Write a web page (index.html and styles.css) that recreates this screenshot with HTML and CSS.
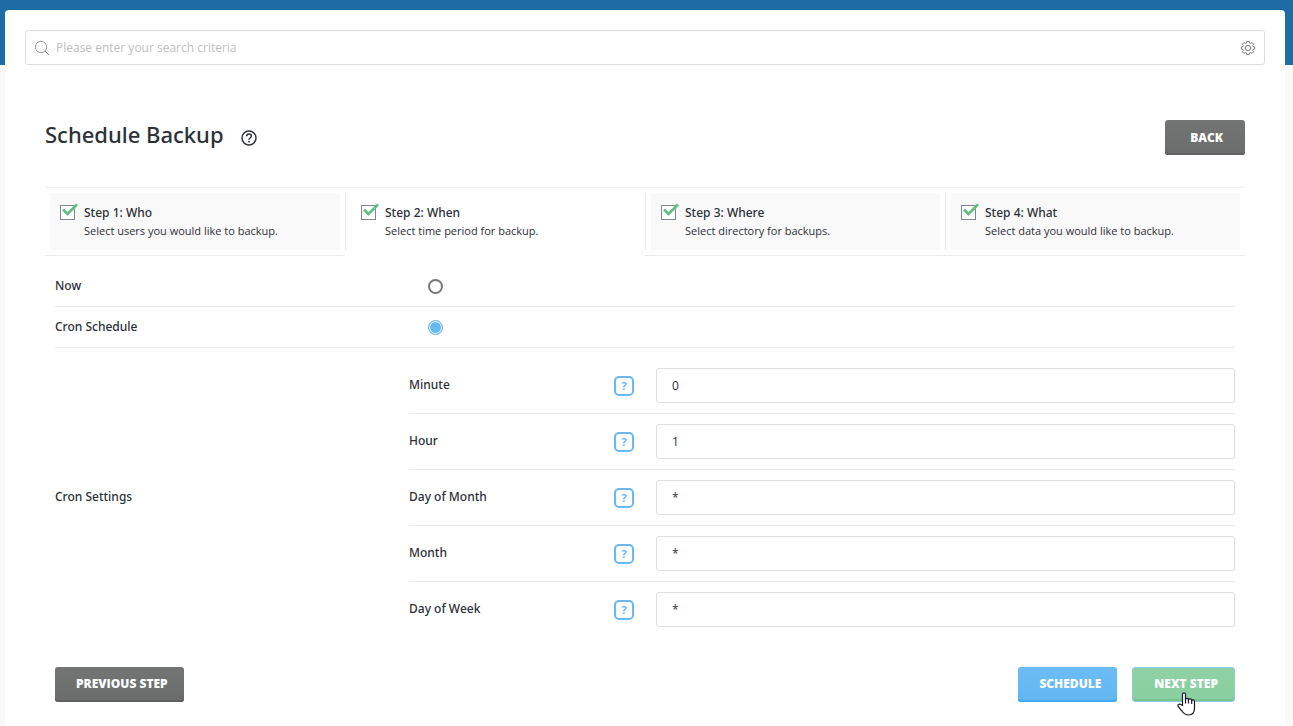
FILE: index.html
```
<!DOCTYPE html>
<html lang="en">
<head>
<meta charset="utf-8">
<title>Schedule Backup</title>
<meta name="viewport" content="width=device-width, initial-scale=1">
<link rel="stylesheet" href="styles.css">
</head>
<body>
<svg class="sprite" width="0" height="0" aria-hidden="true">
  <symbol id="tick" viewBox="0 0 18 17">
    <rect x="0.5" y="2.5" width="14" height="14" fill="#fff" stroke="#7f8797"/>
    <path d="M3 6.500l4.500 4.500L17 1.500" fill="none" stroke="#5fbf82" stroke-width="2.600"/>
  </symbol>
</svg>
<main class="panel">
  <form class="search" role="search">
    <svg class="search-icon" width="16" height="16" viewBox="0 0 16 16" aria-hidden="true"><circle cx="7" cy="7" r="5.700" fill="none" stroke="#a0a0a0"/><path d="M11 11l4 4" stroke="#888" fill="none"/></svg>
    <input class="search-input" type="search" aria-label="Search" placeholder="Please enter your search criteria">
    <button class="icon-button" type="button" aria-label="Search settings">
      <svg width="16" height="16" viewBox="0 0 16 16" fill="none" stroke="#777" stroke-linejoin="round" aria-hidden="true"><circle cx="8" cy="8" r="2.600"/><path d="M6.800 1.400h2.400l.4 1.700 1 .4 1.500-.9 1.500 1.500-.9 1.500.4 1 1.600.4v2l-1.600.4-.4 1 .9 1.500-1.500 1.500-1.500-.9-1 .4-.4 1.700H6.800l-.4-1.700-1-.4-1.500.9-1.500-1.500.9-1.500-.4-1L1.300 9V7l1.600-.4.4-1-.9-1.500 1.500-1.500 1.500.9 1-.4z"/></svg>
    </button>
  </form>

  <section class="content">
    <header class="page-head">
      <h1 class="title">Schedule Backup</h1>
      <button class="icon-button" type="button" aria-label="Help">
        <svg width="18" height="18" viewBox="0 0 18 18" fill="none" stroke="#2f353d" stroke-width="1.500" aria-hidden="true"><circle cx="9" cy="9" r="7"/><path d="M6.600 7.300c0-1.400 1-2.300 2.400-2.300s2.400.9 2.400 2.100c0 1.600-2.400 1.700-2.400 3.600M9 11.800v1.600"/></svg>
      </button>
      <button class="btn btn-grey btn-back" type="button">Back</button>
    </header>

    <ol class="steps">
      <li class="step"><button class="step-button" type="button"><svg class="tick" width="18" height="17" aria-hidden="true"><use href="#tick"/></svg><span class="step-text"><span class="step-name">Step 1: Who</span><span class="step-note">Select users you would like to backup.</span></span></button></li>
      <li class="step step-current"><button class="step-button" type="button" aria-current="step"><svg class="tick" width="18" height="17" aria-hidden="true"><use href="#tick"/></svg><span class="step-text"><span class="step-name">Step 2: When</span><span class="step-note">Select time period for backup.</span></span></button></li>
      <li class="step"><button class="step-button" type="button"><svg class="tick" width="18" height="17" aria-hidden="true"><use href="#tick"/></svg><span class="step-text"><span class="step-name">Step 3: Where</span><span class="step-note">Select directory for backups.</span></span></button></li>
      <li class="step"><button class="step-button" type="button"><svg class="tick" width="18" height="17" aria-hidden="true"><use href="#tick"/></svg><span class="step-text"><span class="step-name">Step 4: What</span><span class="step-note">Select data you would like to backup.</span></span></button></li>
    </ol>

    <form class="schedule">
      <div class="row"><label for="now">Now</label><div class="row-value"><input class="radio" type="radio" name="when" id="now"></div></div>
      <div class="row"><label for="cron">Cron Schedule</label><div class="row-value"><input class="radio" type="radio" name="when" id="cron" checked></div></div>
      <div class="settings" role="group" aria-labelledby="cron-settings">
        <span class="settings-name" id="cron-settings">Cron Settings</span>
        <div class="fields">
          <div class="field"><label for="minute">Minute</label><button class="hint" type="button" aria-label="Help for minute">?</button><input class="text" id="minute" type="text" value="0"></div>
          <div class="field"><label for="hour">Hour</label><button class="hint" type="button" aria-label="Help for hour">?</button><input class="text" id="hour" type="text" value="1"></div>
          <div class="field"><label for="day">Day of Month</label><button class="hint" type="button" aria-label="Help for day of month">?</button><input class="text" id="day" type="text" value="*"></div>
          <div class="field"><label for="month">Month</label><button class="hint" type="button" aria-label="Help for month">?</button><input class="text" id="month" type="text" value="*"></div>
          <div class="field"><label for="weekday">Day of Week</label><button class="hint" type="button" aria-label="Help for day of week">?</button><input class="text" id="weekday" type="text" value="*"></div>
        </div>
      </div>
      <div class="actions">
        <button class="btn btn-grey" type="button">Previous Step</button>
        <button class="btn btn-blue" type="button">Schedule</button>
        <button class="btn btn-green" type="button">Next Step
          <svg class="pointer" width="19" height="24" viewBox="0 0 19 24" aria-hidden="true"><path d="M5.500 13.500V2.500C5.500 .3 8.500 .3 8.500 2.500V7.500C9 5.800 11.500 6 11.500 7.800C12.200 6.300 14.700 6.700 14.700 8.500C15.500 7.300 17.500 7.800 17.500 9.500V16C17.500 20.500 15 23 11.500 23C8 23 6.500 21.500 4.500 18.500L1.200 14.500C.3 12.800 2 11.500 3.500 12.300Z" fill="#fff" stroke="#1b1b2b" stroke-width="1.200"/><path d="M8.500 7v4.500M11.500 7.500v4M14.700 8v4" stroke="#1b1b2b" stroke-width="1.200"/></svg>
        </button>
      </div>
    </form>
  </section>
</main>
</body>
</html>
```
FILE: styles.css
```
* { box-sizing: border-box; }

body {
  margin: 0;
  padding: 10px 8px 0 5px;
  min-height: 100vh;
  display: flex;
  background: linear-gradient(#1e6ca6, #1e6ca6) top / 100% 65px no-repeat #f9f9f9;
  color: #2c3138;
  font: 12px/20px "Open Sans", "Noto Sans", sans-serif;
}

button, input { font: inherit; color: inherit; }
button { cursor: pointer; }
.sprite { position: absolute; }

.panel {
  flex: 1;
  padding: 20px 20px 24px;
  background: #fff;
  border-radius: 4px 4px 0 0;
}

.search {
  display: flex;
  align-items: center;
  gap: 6px;
  height: 35px;
  padding: 0 8px;
  border: 1px solid #dcdee0;
  border-radius: 3px;
}
.search-icon { flex: none; }
.search-input {
  flex: 1;
  min-width: 0;
  padding: 0;
  border: 0;
  outline: 0;
  background: none;
}
.search-input::placeholder { color: #c0c0c0; opacity: 1; }

.icon-button {
  display: flex;
  padding: 0;
  border: 0;
  background: none;
}

.content { padding: 55px 20px 0; }

.page-head {
  display: flex;
  align-items: center;
  gap: 16px;
  margin-bottom: 32px;
}
.title {
  margin: 0;
  padding-bottom: 8px;
  font: 500 22px/26px "Noto Sans", sans-serif;
}

.btn {
  height: 35px;
  padding: 0 16px 2px 21px;
  border: 0;
  border-radius: 3px;
  color: #fff;
  font-weight: 800;
  text-transform: uppercase;
}
.btn-grey {
  background: linear-gradient(#737574, #6b6d6c);
  box-shadow: inset 0 -2px #5f6160;
}
.btn-blue {
  background: linear-gradient(#6cbcf4, #62b7f2);
  box-shadow: inset 0 -2px #41a9ef;
}
.btn-green {
  position: relative;
  border: 1px solid #8dcbe3;
  background: linear-gradient(#8fd1a5, #89cf9f);
  box-shadow: inset 0 -2px #78c390;
}
.btn-back { margin-left: auto; padding: 0 22px 0 25px; }

.pointer {
  position: absolute;
  top: 24px;
  left: 44px;
}

.steps {
  display: grid;
  grid-template-columns: repeat(4, 1fr);
  margin: 0;
  padding: 0;
  border-top: 1px solid #ededed;
  list-style: none;
}
.step {
  padding: 5px 0;
  border-bottom: 1px solid #ebebeb;
}
.step-current { border-bottom-color: transparent; }
.step-button {
  display: flex;
  gap: 6px;
  width: 100%;
  height: 57px;
  padding: 10px 15px;
  border: 0;
  background: linear-gradient(#f9f9f9, #f9f9f9) 5px 0 / calc(100% - 10px) 100% no-repeat;
  text-align: left;
}
.step + .step .step-button { border-left: 1px solid #ebebeb; }
.step-current .step-button { background: none; }
.tick { flex: none; }
.step-text { display: flex; flex-direction: column; }
.step-note { font-size: 11px; line-height: 16px; }

.schedule { padding: 10px 10px 0; }

label, .settings-name, .step-name {
  font-family: "Noto Sans", sans-serif;
  font-weight: 500;
}

.row {
  display: grid;
  grid-template-columns: 30% 1fr;
  align-items: center;
  height: 41px;
  border-bottom: 1px solid #ebebeb;
}
.row-value { display: flex; padding-left: 19px; }

.radio {
  appearance: none;
  width: 15px;
  height: 15px;
  margin: 0;
  border: 2px solid #777;
  border-radius: 50%;
  background: #fff;
}
.radio:checked {
  border: 1px solid #68b9f1;
  background: #68b9f1;
  box-shadow: inset 0 0 0 1px #fff;
}

.settings {
  display: grid;
  grid-template-columns: 30% 1fr;
  align-items: center;
  padding: 10px 0;
}
.settings-name, .field label { padding-bottom: 2px; }
.field {
  display: grid;
  grid-template-columns: 205px 20px 1fr;
  align-items: center;
  height: 56px;
  border-bottom: 1px solid #ebebeb;
}
.field:last-child { border-bottom-color: transparent; }
.hint {
  width: 20px;
  height: 20px;
  padding: 0;
  border: 2px solid #68b9f1;
  border-radius: 5px;
  background: #fff;
  color: #68b9f1;
  font-size: 11px;
  line-height: 16px;
  font-weight: 700;
}
.text {
  width: 100%;
  height: 35px;
  padding: 0 15px;
  border: 1px solid #dcdee0;
  border-radius: 3px;
  background: #fff;
}
.field .text { justify-self: end; width: calc(100% - 22px); }

.actions {
  display: flex;
  gap: 15px;
  padding-top: 19px;
}
.btn-blue { margin-left: auto; }
```
